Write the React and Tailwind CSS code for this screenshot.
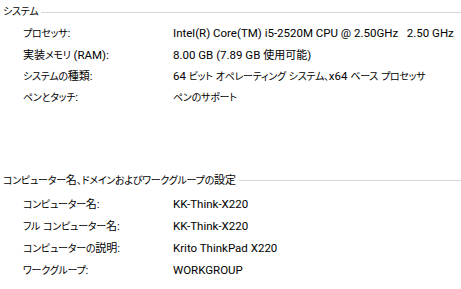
const system = [
  ['プロセッサ:', 'Intel(R) Core(TM) i5-2520M CPU @ 2.50GHz   2.50 GHz'],
  ['実装メモリ (RAM):', '8.00 GB (7.89 GB 使用可能)'],
  ['システムの種類:', '64 ビット オペレーティング システム、x64 ベース プロセッサ'],
  ['ペンとタッチ:', 'ペンのサポート'],
];

const computer = [
  ['コンピューター名:', 'KK-Think-X220'],
  ['フル コンピューター名:', 'KK-Think-X220'],
  ['コンピューターの説明:', 'Krito ThinkPad X220'],
  ['ワークグループ:', 'WORKGROUP'],
];

// Yu Gothic UI has narrow kana and full kanji; mimic with two run sizes
const RUNS = /([\u3000-\u30ff\uff00-\uffef]+|[\u4e00-\u9fff]+)/;
const KANJI = /[\u4e00-\u9fff]/;

function Txt({ children }) {
  return children.split(RUNS).map((part, i) => {
    if (i % 2 === 0) return <span key={i}>{part}</span>;
    if (KANJI.test(part)) return <span key={i} className="text-[11px]">{part}</span>;
    return <span key={i} className="text-[10px] tracking-[-0.25px]">{part}</span>;
  });
}

function Section({ title, rows, className, rowsClass }) {
  return (
    <section className={className}>
      <div className="flex items-center h-[14px] pl-[3px]">
        <span className="leading-none"><Txt>{title}</Txt></span>
        <div className="flex-1 h-px bg-[#d6d6d6] ml-[3px]" />
      </div>
      <div className={`flex flex-col ${rowsClass}`}>
        {rows.map(([label, value]) => (
          <div key={label} className="flex items-center h-[14px] leading-none">
            <span className="w-[173px] pl-[23px] shrink-0"><Txt>{label}</Txt></span>
            <span className="whitespace-pre"><Txt>{value}</Txt></span>
          </div>
        ))}
      </div>
    </section>
  );
}

export default function App() {
  return (
    <div
      className="w-[461px] h-[289px] bg-white text-black text-[11.5px] overflow-hidden pt-[5px] [font-feature-settings:'palt']"
      style={{ fontFamily: 'Roboto, "Noto Sans CJK JP", sans-serif' }}
    >
      <Section title="システム" rows={system} rowsClass="mt-[8px] gap-[7.3px]" />
      <Section
        title="コンピューター名、ドメインおよびワークグループの設定"
        rows={computer}
        className="mt-[69px]"
        rowsClass="mt-[10px] gap-[8px]"
      />
    </div>
  );
}
